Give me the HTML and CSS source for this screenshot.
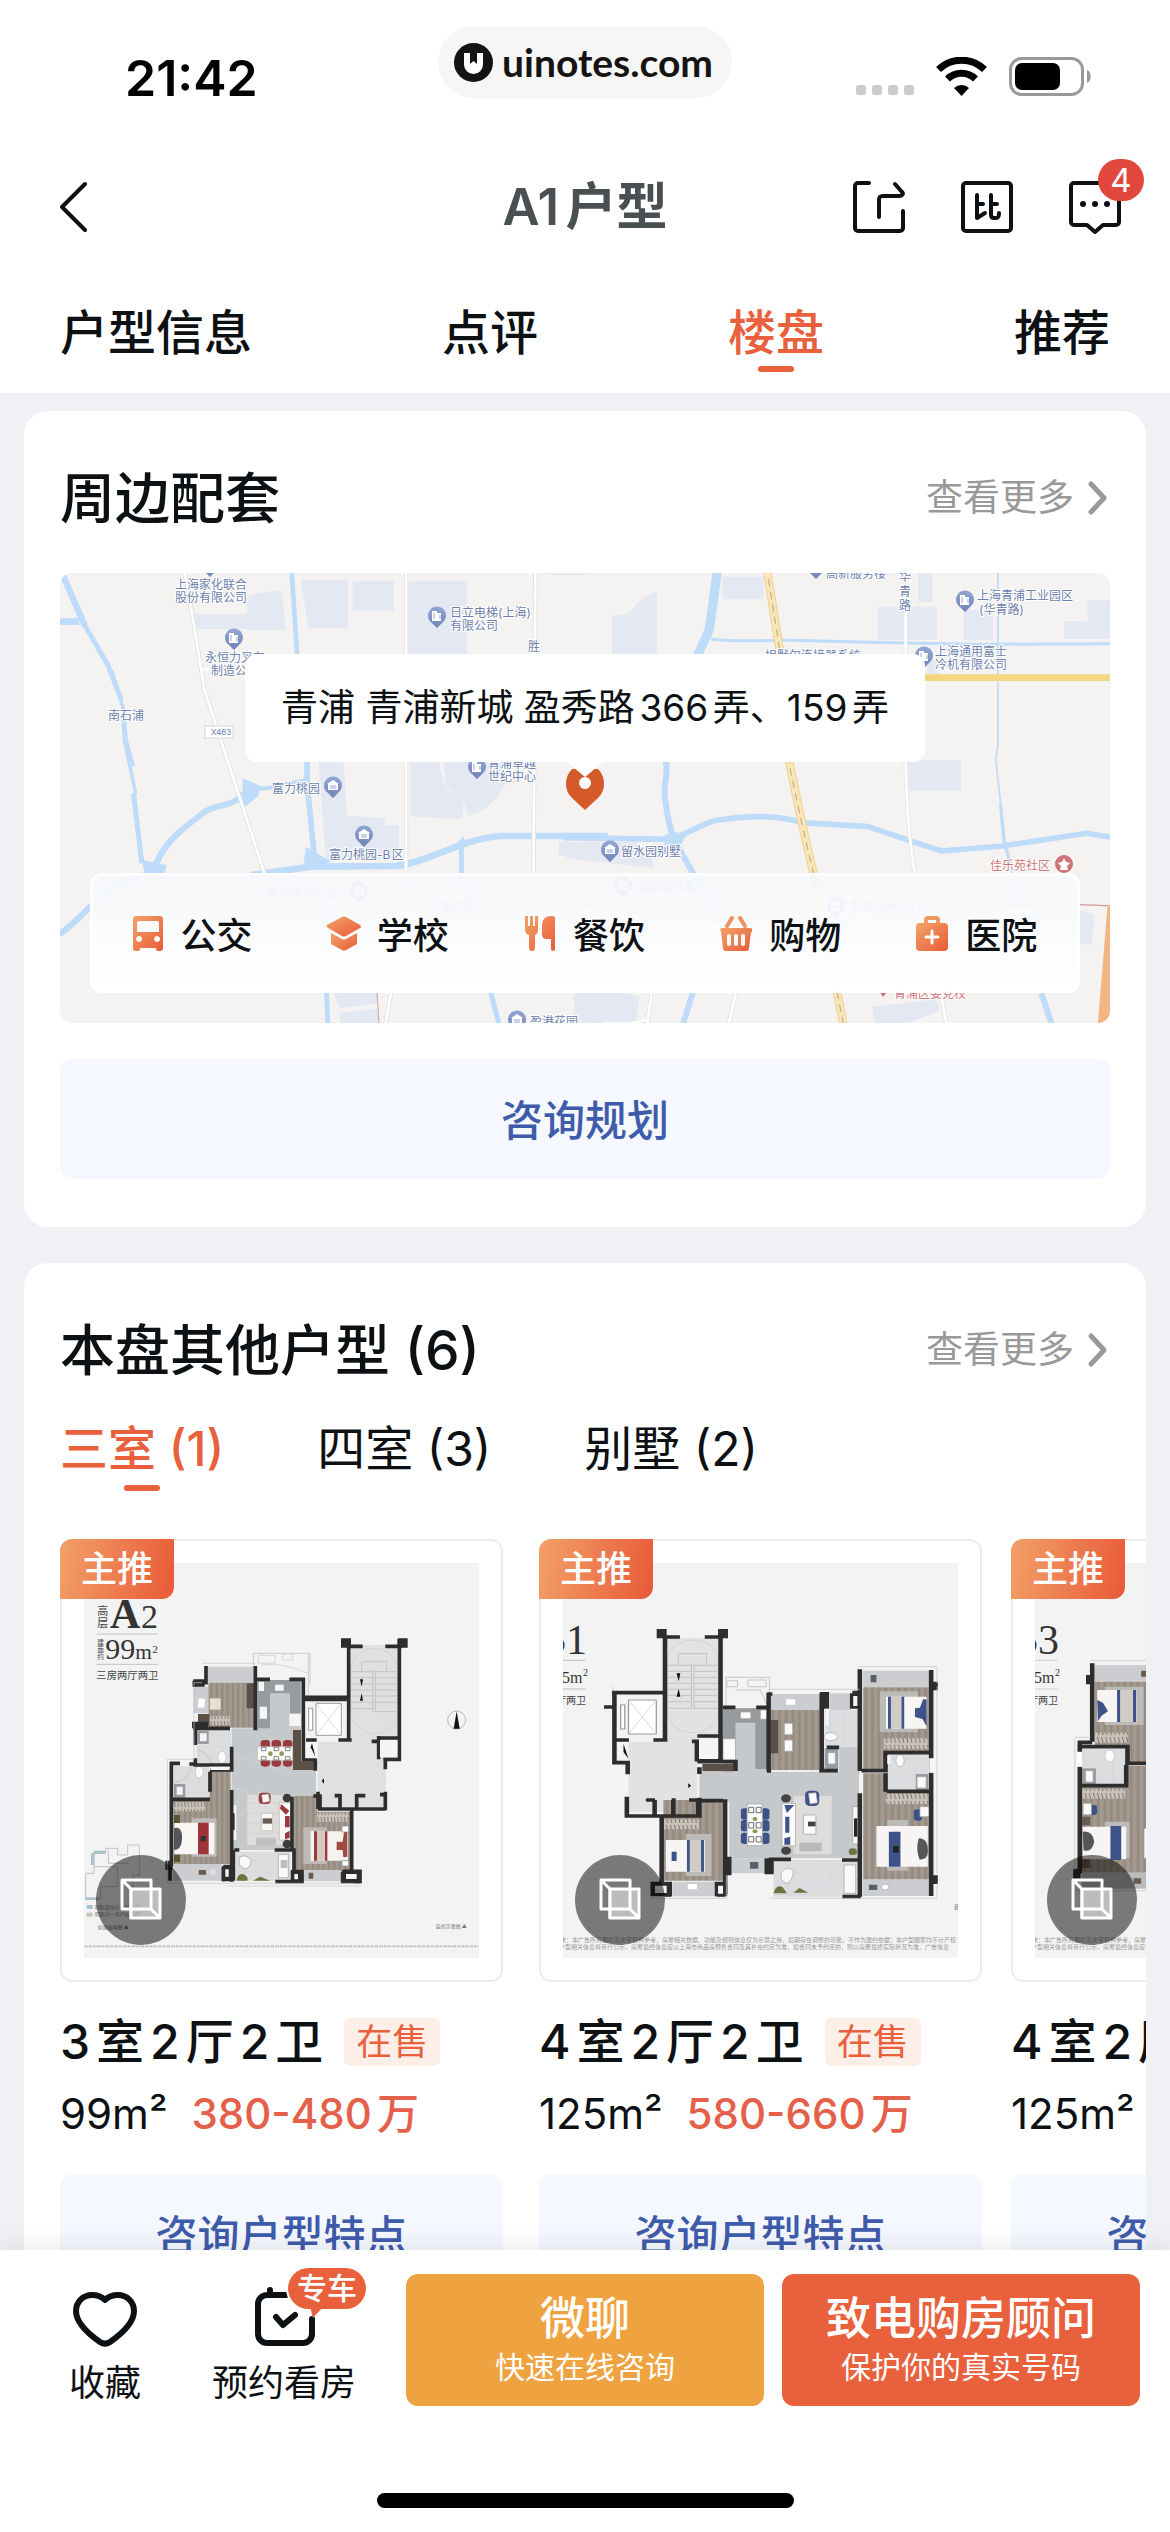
FILE: index.html
```html
<!DOCTYPE html>
<html lang="zh-CN">
<head>
<meta charset="utf-8">
<meta name="viewport" content="width=device-width, initial-scale=1">
<title>A1户型</title>
<link rel="stylesheet" href="styles.css">
</head>
<body>

<svg class="sprite" aria-hidden="true">
  <defs>
    <linearGradient id="warm" x1="0" y1="0" x2="1" y2="1">
      <stop offset="0" stop-color="#f2a36a"/><stop offset="1" stop-color="#e95b38"/>
    </linearGradient>
    <linearGradient id="pinfill" x1="0" y1="0" x2="0" y2="1">
      <stop offset="0" stop-color="#93a6d3"/><stop offset="1" stop-color="#6f83b8"/>
    </linearGradient>
    <pattern id="wood" width="16" height="60" patternUnits="userSpaceOnUse">
      <rect width="16" height="60" fill="#a0958a"/><rect width="5" height="60" fill="#958a7f"/><rect x="9" width="2" height="60" fill="#aca297"/>
    </pattern>
    <pattern id="tile" width="34" height="34" patternUnits="userSpaceOnUse">
      <rect width="34" height="34" fill="#dcdddf"/><path d="M0 0H34M0 0V34" stroke="#cfd1d3" stroke-width="2"/>
    </pattern>
    <pattern id="hanger" width="10" height="24" patternUnits="userSpaceOnUse">
      <rect width="10" height="24" fill="#c9c2b8"/><path d="M3 3l3 18" stroke="#5b534b" stroke-width="2"/>
    </pattern>
    <symbol id="chevron" viewBox="0 0 24 36"><path d="M5 4l13 14L5 32" fill="none" stroke="#999" stroke-width="5" stroke-linecap="round" stroke-linejoin="round"/></symbol>
    <symbol id="cube" viewBox="0 0 90 90">
      <rect x="33" y="33" width="31" height="31" fill="#fff" opacity=".5"/>
      <path d="M26 25h29v29H26zM35 34h29v29H35zM26 25l9 9M55 54l9 9" fill="none" stroke="#fff" stroke-width="3" stroke-linejoin="round"/>
    </symbol>
    <g id="pin">
      <path d="M0 12L-5 7A9 9 0 1 1 5 7Z" fill="url(#pinfill)"/>
      <path d="M-5-5h5v2h4v8h-9z" fill="#fff"/><path d="M-3-3v6M3-1v4" stroke="#93a6d3" stroke-width="1"/>
    </g>
    <g id="homepin">
      <path d="M0 12L-5 7A9 9 0 1 1 5 7Z" fill="url(#pinfill)"/>
      <path d="M0-6L6-2H5v6H-5v-6h-1z" fill="#fff"/><path d="M-3 0h6M-3 2h6" stroke="#93a6d3" stroke-width="1"/>
    </g>
  </defs>
</svg>

<header class="top">
  <div class="status">
    <span class="time">21:42</span>
    <div class="site">
      <svg class="site-logo" viewBox="0 0 39 39"><circle cx="19.5" cy="19.5" r="19.5" fill="#161313"/><path d="M10 10h6v9l3-3 1 0 3 3v-9h6v11.500a9.500 9.500 0 0 1-19 0z" fill="#fff"/><path d="M16 9h7v12l-3.500-3-3.500 3z" fill="#161313"/></svg>
      <span>uinotes.com</span>
    </div>
    <svg class="signals" viewBox="0 0 237 42" aria-label="信号">
      <g fill="#ccc"><rect y="28" width="10" height="10" rx="3"/><rect x="16" y="28" width="10" height="10" rx="3"/><rect x="32" y="28" width="10" height="10" rx="3"/><rect x="48" y="28" width="10" height="10" rx="3"/></g>
      <g transform="translate(80 0)" fill="none" stroke="#000">
        <path d="M2.500 12.500a33 33 0 0 1 46 0" stroke-width="7"/><path d="M11.500 22a20 20 0 0 1 28 0" stroke-width="7"/><path d="M25.500 39L18 31a11 11 0 0 1 15 0z" fill="#000" stroke="none"/>
      </g>
      <rect x="154.500" y="1.500" width="72" height="36" rx="11" fill="none" stroke="#999" stroke-width="3"/>
      <rect x="159" y="6" width="45" height="27" rx="7"/><path d="M231 13c5 2 5 11 0 13z" fill="#999"/>
    </svg>
  </div>

  <div class="navbar">
    <button class="icon-btn back" aria-label="返回"><svg width="30" height="54" viewBox="0 0 30 54"><path d="M25 4L2 27l23 23" fill="none" stroke="#0d1114" stroke-width="4" stroke-linecap="round" stroke-linejoin="round"/></svg></button>
    <h1>A1户型</h1>
    <div class="nav-actions">
      <button class="icon-btn" aria-label="分享"><svg class="line-icon" viewBox="0 0 54 54"><path d="M17 3H6a3 3 0 0 0-3 3v42a3 3 0 0 0 3 3h42a3 3 0 0 0 3-3V31"/><path d="M27 37V20c0-3 1-4 4-4h16c3 0 5-2 3-4l-7-8"/></svg></button>
      <button class="icon-btn" aria-label="对比"><svg class="line-icon" viewBox="0 0 54 54"><rect x="3" y="3" width="48" height="48" rx="3"/><path d="M17 15v23l8-5M18 24h5M31 15v20c0 2 1 3 3 3h2c2 0 3-1 3-5M31 24h6"/></svg></button>
      <button class="icon-btn" aria-label="消息"><svg class="line-icon" viewBox="0 0 54 54"><path d="M19 45H6a3 3 0 0 1-3-3V6a3 3 0 0 1 3-3h42a3 3 0 0 1 3 3v36a3 3 0 0 1-3 3H35l-8 7z"/><g fill="#0d1114" stroke="none"><circle cx="15" cy="24" r="3"/><circle cx="27" cy="24" r="3"/><circle cx="39" cy="24" r="3"/></g></svg><span class="count">4</span></button>
    </div>
  </div>

  <nav class="tabs">
    <a href="#info">户型信息</a><a href="#review">点评</a><a class="active" href="#estate">楼盘</a><a href="#more">推荐</a>
  </nav>
</header>

<main>
  <section class="card" id="estate">
    <div class="card-head"><h2>周边配套</h2><a class="more" href="#around">查看更多<svg><use href="#chevron"/></svg></a></div>
    <div class="map">
      <svg class="map-art" viewBox="0 0 1050 450" preserveAspectRatio="xMidYMid slice">
        <rect width="1050" height="450" fill="#f4f3f1"/>
        <g transform="matrix(.35714 0 0 .33333 -20 -13)">
          <g fill="#e4e8f2">
            <path d="M730 60h132v145H752zM875 62h116v90H875zM580 110q40-18 98-18l10 118H580zM432 162h148v45H436zM1030 62h166v225h-166zM1408 38h120v6h-110z"/>
            <path d="M780 600h70l10 168 105 6 2 22h38v105H800zM1038 600h78q10 60 25 90 60 10 40 85-90 0-143-8zM1128 600h190q-10 130-120 170-5-60-60-90zM1452 845h220v55l-220-14zM820 1290h122l6 40-110 15zM838 1360l110-15 3 44H840zM1500 1290h150l-20 70-60 30-80-5z"/>
          </g>
          <g fill="none" stroke="#bfdbfa" stroke-linejoin="round">
            <path d="M62 40L90 110 125 195" stroke-width="18"/><path d="M55 185h55" stroke-width="20"/>
            <path d="M122 190L190 315 228 420M234 480L240 545 260 620M262 700L285 910" stroke-width="14"/><path d="M200 330L236 455V540L268 700" stroke-width="10"/>
            <path d="M705 38L720 285" stroke-width="13"/><path d="M748 600v70l22 240" stroke-width="16"/><path d="M570 690l70-6 105-24" stroke-width="12"/>
            <path d="M570 700C540 745 480 730 450 765 400 805 365 835 340 880L310 940 260 955C190 960 110 1090 50 1125" stroke-width="18"/>
            <path d="M590 945L760 920 990 918C1080 912 1180 835 1290 828H1590" stroke-width="20"/><path d="M1180 840v110l30 90M790 990l16 400M1260 1290l25 100" stroke-width="14"/>
          </g>
          <path d="M567 655l50 22-5 30-45 40zM745 860l70 45-80 25zM285 900l70 15-10 45-50-10zM1170 850l15-22 10 30z" fill="#bfdbfa"/>
          <g fill="none" stroke="#dddcda" stroke-width="12"><path d="M405 38q20 110 55 350L630 945M1025 38v950M1387 38l-5 900M984 1290l-16 100"/></g>
          <g fill="none" stroke="#fff" stroke-width="8"><path d="M405 38q20 110 55 350L630 945M1025 38v950M1387 38l-5 900M984 1290l-16 100M455 328h40"/></g>
          <path d="M943 1290l6 100M900 1070q120-40 350-50t330-10" fill="none" stroke="#d9a1a1" stroke-width="3"/>
        </g>
        <g transform="matrix(.35714 0 0 .33333 510 -13)">
          <path fill="#e4e8f2" d="M118 165q40 5 60-20 20-35 65-52v190H118zM427 50h115v68H427zM975 40h40v86h-40zM862 140h165v100H862zM1102 150h82v90h-82zM1383 183h66v-62h63v116h-129zM945 600h150v92H950zM-10 845l242 30v50l-242-30zM845 1340l180-22 10 35-90 36h-90zM10 1310l120-20 65 20-10 75h-80l-8-40-80 10zM1425 1050l45 15-10 90-40-5zM1000 300h30v42h-30z"/>
          <g fill="none" stroke="#bfdbfa" stroke-linejoin="round">
            <path d="M412 38L390 210 355 290" stroke-width="26"/><path d="M395 238q80 8 200 2l240 7 300 6 380-2" stroke-width="9"/>
            <path d="M268 600c10 60-12 70 0 130 5 50 15 70 18 100L345 940l60 110M345 1295l-28 95M1320 1300l28 90" stroke-width="17"/>
            <path d="M-20 833l300 5C340 820 380 780 430 778q130-20 220 10l185 12q80 30 205 73l170-15q130-20 235-38l80 14" stroke-width="17"/>
            <path d="M1198 38v520l-6 40 24 230 4 40 25 100v80" stroke-width="5"/><path d="M1205 730l10 110 20 80" stroke-width="9"/>
          </g>
          <path d="M265 825l30-10 30 10-15 30-45 10z" fill="#bfdbfa"/>
          <g fill="none" stroke="#f3d391" stroke-width="24"><path d="M553 38L590 290 615 610Q650 800 682 940L765 1389"/></g>
          <g fill="none" stroke="#f9e6b8" stroke-width="18"><path d="M553 38L590 290 615 610Q650 800 682 940L765 1389"/></g>
          <path d="M556 58L590 290 617 630Q650 800 682 940L765 1389" fill="none" stroke="#b9a98b" stroke-width="3" stroke-dasharray="22 16"/>
          <path d="M970 353h550" stroke="#f6d57f" stroke-width="20"/>
          <g fill="none" stroke="#dddcda" stroke-width="11"><path d="M940 140v480q5 190 25 320M230 1290l-14 100M465 1295l-20 95M1040 1310l14 80M170 1389l50-10"/></g>
          <g fill="none" stroke="#fff" stroke-width="8"><path d="M940 140v480q5 190 25 320M230 1290l-14 100M465 1295l-20 95M1040 1310l14 80M170 1389l50-10"/></g>
          <path d="M0 1020q200 60 600 70t500-30 420-22" fill="none" stroke="#cf9c9c" stroke-width="4"/>
          <path d="M1505 1040h15v350h-42z" fill="#f1b683"/>
        </g>
        <g class="map-labels">
          <text x="115" y="16">上海家化联合</text><text x="115" y="29">股份有限公司</text>
          <text x="390" y="44">日立电梯(上海)</text><text x="390" y="57">有限公司</text>
          <text x="145" y="89">永恒力叉车</text><text x="151" y="102">制造公司</text>
          <text x="48" y="147">南石浦</text><text x="468" y="78">胜</text>
          <text x="428" y="195">青浦卓越</text><text x="428" y="208">世纪中心</text>
          <text x="212" y="220">富力桃园</text><text x="269" y="286">富力桃园-B区</text>
          <text x="470" y="453">盈港花园</text><text x="207" y="325">民乐佳苑一区</text><text x="378" y="338">漕盈路</text>
          <text x="766" y="5">高新服务楼</text><text x="705" y="87">坦默尔连接器系统</text>
          <text x="839" y="8">华</text><text x="839" y="23">青</text><text x="839" y="37">路</text>
          <text x="917" y="27">上海青浦工业园区</text><text x="919" y="41">(华青路)</text>
          <text x="875" y="83">上海通用富士</text><text x="875" y="96">冷机有限公司</text>
          <text x="561" y="283">留水园别墅</text><text x="576" y="319">诚中城公寓</text><text x="789" y="339">青浦绿地中心</text>
          <g class="red"><text x="930" y="297">佳乐苑社区</text><text x="834" y="425">青浦区委党校</text></g>
        </g>
        <rect x="145" y="153" width="28" height="12" fill="#fff" stroke="#d5d8e2"/><text class="road-no" x="151" y="162">X463</text>
        <use href="#pin" x="150" y="-8"/><use href="#pin" x="377" y="43"/><use href="#pin" x="174" y="65"/><use href="#pin" x="417" y="194"/>
        <use href="#homepin" x="273" y="213"/><use href="#homepin" x="304" y="262"/><use href="#homepin" x="457" y="447"/><use href="#homepin" x="299" y="318"/>
        <use href="#pin" x="756" y="-6"/><use href="#pin" x="905" y="27"/><use href="#pin" x="864" y="83"/><use href="#homepin" x="550" y="277"/><use href="#homepin" x="563" y="313"/><use href="#pin" x="776" y="333"/>
        <circle cx="1004" cy="291" r="9" fill="#cf7478"/><path d="M1004 285l2 4 4 1-3 3 1 4h-8l1-4-3-3 4-1z" fill="#fff"/><path d="M819 418h9l-5 6z" fill="#cf7478"/>
        <path d="M525 237l-13-12q-6-6-6-14 0-9 6-15h26q6 6 6 15 0 8-6 14z" fill="#d55a29"/><circle cx="525" cy="210" r="6" fill="#fff"/>
      </svg>
      <p class="address">青浦 青浦新城 盈秀路366弄、159弄</p>
      <ul class="facilities">
        <li><a href="#bus"><svg viewBox="0 0 36 36"><path fill="url(#warm)" fill-rule="evenodd" d="M6 1h24q3 0 3 3v29q0 3-3 3h-2q-2 0-2-3H10q0 3-2 3H6q-3 0-3-3V4q0-3 3-3zm3 5q-2 0-2 2v9h22V8q0-2-2-2zM9 21a3 3 0 1 0 .1 0zm18 0a3 3 0 1 0 .1 0z"/></svg>公交</a></li>
        <li><a href="#school"><svg viewBox="0 0 36 36"><path fill="url(#warm)" d="M1 10q-1 2 1 3l14 8q2 1 4 0l14-8q2-1 0-3L20 2q-2-1-4 0z"/><path fill="url(#warm)" d="M5 18l11 6q2 1 4 0l11-6v11l-11 6q-2 1-4 0L5 29z"/></svg>学校</a></li>
        <li><a href="#food"><svg viewBox="0 0 36 36"><path fill="url(#warm)" d="M3 1h3v10h2V1h3v10h2V1h3v13q0 5-3 6v13q0 3-3 3t-3-3V20q-4-1-4-6zM33 3v31q0 2-2 2t-2-2V24h-5q-4 0-4-5V10q0-9 10-9 3 0 3 2z"/></svg>餐饮</a></li>
        <li><a href="#shop"><svg viewBox="0 0 36 36"><path d="M14 3L9 11M22 3l5 8" stroke="#f0905c" stroke-width="4" stroke-linecap="round"/><path fill="url(#warm)" fill-rule="evenodd" d="M4 13h28q3 0 2 4h-1l-2 16q0 3-3 3H8q-3 0-3-3L3 17q-2-4 1-4zm5 7v10q2 2 4 0V20q-2-2-4 0zm7 0v10q2 2 4 0V20q-2-2-4 0zm7 0v10q2 2 4 0V20q-2-2-4 0z"/></svg>购物</a></li>
        <li><a href="#hospital"><svg viewBox="0 0 36 36"><path d="M12 9V5q0-2 2-2h8q2 0 2 2v4" fill="none" stroke="#f09a63" stroke-width="4"/><rect x="2" y="8" width="32" height="28" rx="4" fill="url(#warm)"/><path d="M18 16v12M12 22h12" stroke="#fff" stroke-width="3" stroke-linecap="round"/></svg>医院</a></li>
      </ul>
    </div>
    <button class="ask">咨询规划</button>
  </section>

  <section class="card card-bleed" id="more">
    <div class="card-head"><h2>本盘其他户型 (6)</h2><a class="more" href="#plans">查看更多<svg><use href="#chevron"/></svg></a></div>
    <nav class="rooms"><a class="active" href="#r3">三室 (1)</a><a href="#r4">四室 (3)</a><a href="#villa">别墅 (2)</a></nav>
    <div class="plans">
      <div class="plan-group">
        <article class="plan">
          <div class="thumb">
            <svg class="drawing" viewBox="132 129 1185 1185">
              <rect x="132" y="129" width="1185" height="1185" fill="#f3f3f3"/>
              <g fill="#333" class="serif">
                <text x="210" y="324" font-size="126" font-weight="700">A</text><text x="303" y="324" font-size="102">2</text>
                <text x="196" y="418" font-size="90">99</text><text x="286" y="418" font-size="64">m</text><text x="337" y="398" font-size="34">2</text>
              </g>
              <g fill="#444"><text x="172" y="286" font-size="33">高</text><text x="172" y="322" font-size="33">层</text><text x="172" y="375" font-size="20">建</text><text x="172" y="396" font-size="20">面</text><text x="172" y="417" font-size="20">约</text><text x="169" y="478" font-size="31">三房两厅两卫</text></g>
              <path d="M170 342h184M170 433h184" stroke="#aaa" stroke-width="2"/>
              <!-- floors -->
              <path d="M932 375h143v290H932zM833 665h205v195H833z" fill="#e0e0e0"/>
              <path d="M503 440h138v48H503zM460 500h45v80h-45zM400 1032h145v50H400zM785 1050h120v34H785z" fill="#cbcdd0"/>
              <path d="M505 488h137v135H505zM508 752h64v90h-64zM400 842h172v190H400zM762 828h70v222h-70zM832 875h102v175H832z" fill="url(#wood)"/>
              <path d="M620 490h22v75h-22zM474 582h34v36h-34zM758 630h25v120h-25zM758 725h70v25h-70z" fill="#5c5046"/>
              <path d="M652 480h130v150H652zM575 625h183v365H575zM758 750h70v78h-70z" fill="#c6c9cb"/>
              <path d="M652 480h130v40H690v105h-38zM750 520h32v60h-32z" fill="#979b9e"/>
              <path d="M575 700l180 60M590 900l80-100M660 640l60 30M580 800l90 40" stroke="#d6d8da" stroke-width="2" fill="none"/>
              <path d="M470 630h103v103H470zM400 738h108v100H400zM583 995h168v87H583z" fill="url(#tile)"/>
              <path d="M472 632h34v40h-34zM402 792h34v42h-34z" fill="#999da1"/><path d="M480 640h20v24h-20zM410 800h18v24h-18zM748 582h34v36h-34zM656 485h16v28h-16zM705 494h26v18h-26zM659 560h22v36h-22z" fill="#f5f5f5"/>
              <g fill="#fafafa" stroke="#bbb" stroke-width="2"><ellipse cx="546" cy="712" rx="12" ry="18"/><ellipse cx="478" cy="756" rx="12" ry="18"/><path d="M470 690a50 50 0 0 1 45 42M455 738a52 52 0 0 1-54 48" fill="none"/></g>
              <!-- furniture -->
              <path d="M510 535h32v34h-32z" fill="#e9dfcb"/><path d="M476 534l20 4-4 26-18-2z" fill="#fff"/>
              <path d="M510 588h60v28h-60zM402 846h95v28h-95zM830 878h96v28h-96z" fill="url(#hanger)"/>
              <path d="M622 825h120v150H622z" fill="#dedddb"/><path d="M625 850h115M625 880h115M625 910h115M625 940h115" stroke="#cfcdca" stroke-width="2"/>
              <g fill="#9b3a3e"><rect x="662" y="660" width="28" height="26" rx="10"/><rect x="695" y="660" width="28" height="26" rx="10"/><rect x="729" y="660" width="28" height="26" rx="10"/><rect x="662" y="716" width="28" height="24" rx="10"/><rect x="695" y="716" width="28" height="24" rx="10"/><rect x="729" y="716" width="28" height="24" rx="10"/><rect x="656" y="818" width="36" height="34" rx="12"/></g>
              <path d="M652 680h106v41H652zM665 825l20-3 4 22-20 4zM718 848h36v112h-36zM664 880h34v52h-34z" fill="#fbfaf8" stroke="#b7b3ae" stroke-width="2"/>
              <path d="M664 682h14v10h-14zM702 682h14v10h-14zM736 682h14v10h-14zM664 710h14v10h-14zM702 710h14v10h-14zM736 710h14v10h-14z" fill="none" stroke="#555" stroke-width="2"/><circle cx="691" cy="701" r="7" fill="#8a9a5b"/><circle cx="725" cy="701" r="7" fill="#8a9a5b"/>
              <path d="M723 852l25 20-10 12-18-18zM735 888h14v34h-14zM735 940l14-8v22l-14 4z" fill="#9b3a3e"/><circle cx="741" cy="834" r="13" fill="#3c3c3c"/><circle cx="741" cy="972" r="13" fill="#3c3c3c"/>
              <path d="M668 895h28v16h-28z" fill="#6b5e55"/><path d="M648 953h60v22h-60z" fill="#c3c0c2"/><path d="M575 855h14v105h-14z" fill="#f4f4f4"/><path d="M576 880h8v50h-8z" fill="#333"/>
              <path d="M455 895h75v115h-75zM790 922h70v110h-70z" fill="#bdbbb8"/><path d="M403 908h120v95H403z" fill="#f8f5f3"/><path d="M474 908h32v95h-32z" fill="#9d3437"/><path d="M402 925q20-8 24 20 2 45-24 45z" fill="#55565a"/><path d="M402 885h18v24h-18zM402 1004h18v22h-18z" fill="#5c5330"/><path d="M482 948h16v16h-16z" fill="#333"/>
              <path d="M812 934h112v88H812z" fill="#f6f2ec"/><path d="M822 934h9v88h-9zM855 934h7v88h-7z" fill="#9d3a3a"/><path d="M831 934h24v88h-24z" fill="#d2cbc1"/><path d="M890 965h18l4-28 10-2v75l-12 2-2-22h-18z" fill="#a04a42"/><path d="M906 918h20v18h-20zM906 1022h20v16h-20z" fill="#fff" stroke="#888" stroke-width="2"/>
              <path d="M476 1050h22v14h-22zM806 1058h14v18h-14z" fill="#6a5a50"/><circle cx="518" cy="1056" r="10" fill="#ddd"/>
              <path d="M600 1010q15-8 34 10-4 30-22 26-22-10-12-36zM715 1003h30v70h-30z" fill="#f8f8f8" stroke="#999" stroke-width="2"/><path d="M590 1082q4-26 24-18 12 8 8 18zM640 1082l20-12 30 12z" fill="#69743f"/><path d="M722 1020h20v24h-20z" fill="#b7bcc0"/>
              <!-- elevator and stairs -->
              <path d="M640 480v-80h170v95M920 530H805V400" fill="none" stroke="#ccc" stroke-width="3"/><path d="M655 406h50v24h-50zM728 402h30v18h-30zM665 435q60-10 138 25" fill="none" stroke="#c8c8c8" stroke-width="2"/>
              <path d="M828 550h76v96h-76zM806 565h12v66h-12z" fill="#fff" stroke="#999" stroke-width="3"/><path d="M828 550l76 96M904 550l-76 96" stroke="#ccc" stroke-width="2"/>
              <path d="M932 455h68M932 473h68M932 492h68M932 510h68M932 528h68M932 547h68M932 566h68M1004 455h70M1004 473h70M1004 492h70M1004 510h70M1004 528h70M1004 547h70M1004 575h70M998 450v125M1006 450v125M965 455v-30h75v28" stroke="#b5b5b5" stroke-width="2" fill="none"/>
              <rect x="932" y="385" width="142" height="256" rx="71" fill="none" stroke="#ccc" stroke-width="2"/><path d="M960 478h9l-4 22zM960 542h9l-4-22zM845 783l7-8v16z" fill="#111"/>
              <!-- walls -->
              <g fill="none" stroke="#2d2d2d" stroke-width="11">
                <path d="M498 438v50h-35v12M646 438v185M640 625h12M650 478h40M748 478h42v22M790 500v220h40M793 532h130M793 538h127M926 380v285M895 660h40M905 370h28M1078 358v360h-48M928 379h40M1036 379h50M1016 648v70M1012 654h66M995 664h20M798 660h32M1036 720v28M834 815v52M834 867h202M1036 815v56M900 822v45M950 822v45M884 827h18M948 827h28M1020 824h15M935 870v180M570 625h-105v-10M466 620v55M466 715v20h110M575 680v75M510 750h62M510 755v60M394 726v314M390 730h30M395 838h115M575 810v275M550 1042v42M580 990v92M583 990h15M704 990h52v-160M820 828h20v40M826 752v-34M762 985v100M706 1085h80v-30h-22v28M908 1056v28h52v-30h-50M550 1040h26M390 1040v42M448 732h15"/>
              </g>
              <path d="M903 355h30v28h-30zM1073 355h30v28h-30zM460 478h34v22h-34zM456 605h48v20h-48zM376 1022h22v28h-22zM752 1050h34v38h-34zM905 1050h58v40h-58zM546 1038h34v46h-34z" fill="#2d2d2d"/><path d="M763 1062h11v16h-11zM918 1062h32v15h-32zM556 1048h10v22h-10zM798 670h16v42h-16zM1020 660h52v52h-52zM511 740h58v10h-58z" fill="#f5f5f5"/><path d="M816 670l10 40-14-28z" fill="#111"/>
              <path d="M486 430h160M382 718h80v-230h24M382 718v372h560M562 1098h400" fill="none" stroke="#c5c5c5" stroke-width="2"/>
              <circle cx="1250" cy="600" r="27" fill="none" stroke="#999" stroke-width="2"/><path d="M1250 574l9 52h-18z" fill="#111"/>
              <!-- key plan -->
              <g fill="none" stroke="#aaa" stroke-width="2"><path d="M137 1140v-80h25v-65h35v-10h36v20h30v-30h35v90h-20v70M162 1040h70v60h-50v40M205 990v40h60"/></g><path d="M162 992h35v10h-35zM153 1000h10v35h-10zM137 1132h40v8h-40zM140 1155h18v12h-18z" fill="#a9c4c9"/><path d="M140 1178h18v12h-18z" fill="#c9c0b9"/>
              <g fill="#777" font-size="15"><text x="164" y="1167">阴影部分计产权面积</text><text x="164" y="1189">阴影计一半产权面积</text><text x="173" y="1226">原始结构图 ▲</text><text x="1187" y="1225">装修示意图 ▲</text></g>
              <path d="M133 1279h1183" stroke="#bbb" stroke-width="5" stroke-dasharray="7 2 3 2 9 3"/>
            </svg>
            <span class="flag">主推</span>
            <button class="view3d" aria-label="查看三维户型"><svg><use href="#cube"/></svg></button>
          </div>
          <h3>3室2厅2卫<span class="tag">在售</span></h3>
          <p class="facts">99m²<span class="price">380-480万</span></p>
          <button class="ask">咨询户型特点</button>
        </article>
      </div>
      <div class="plan-group">
        <article class="plan">
          <div class="thumb">
            <svg class="drawing" viewBox="0 0 395 395">
              <rect width="395" height="395" fill="#f3f3f3"/>
              <g transform="matrix(.41459 0 0 .33333 -43.117 -43)">
                <path d="M355 355h125v310H355zM262 665h165v210H262z" fill="#e2e2e2"/>
                <path d="M828 452h160v50H828zM605 522h120v48H605zM748 520h50v55h-50zM828 1078h160v50H828zM510 1015h82v45h-82zM368 1085h105v44H368z" fill="#cbcdd0"/>
                <path d="M828 502h160v250H828zM828 760h160v318H828zM605 570h118v180H605zM346 840h146v242H346z" fill="url(#wood)"/>
                <path d="M490 565h108v280H490zM433 755h385v260H505V842h-72zM770 680h50v80h-50z" fill="#c6c9cb"/>
                <path d="M490 565h108v182h-30V608h-48v50h-30z" fill="#979b9e"/><path d="M735 570h82v110h-82zM885 702h103v110H885zM612 1020h205v110H612z" fill="url(#tile)"/>
                <path d="M735 685h33v64h-33zM955 762h30v48h-30z" fill="#999da1"/>
                <path d="M440 732h76v22h-76zM605 600h18v100h-18z" fill="#5c5046"/>
                <path d="M868 514h92v122h-92zM886 900h50v152h-50zM400 942h62v126h-62z" fill="#bdbbb8"/>
                <path d="M883 530h98v96h-98zM860 918h124v122H860zM352 960h94v95H352z" fill="#f7f5f3"/>
                <path d="M888 530h7v96h-7zM920 530h7v96h-7zM890 935h28v105h-28zM403 960h7v95h-7zM437 960h7v95h-7zM953 565l12-2 8-26 8 2v80l-10-22-18-6zM366 995h12v28h-12z" fill="#3d5288"/><path d="M895 530h25v96h-25zM410 960h27v95h-27z" fill="#cfcbc5"/><path d="M962 955q24 0 22 42 0 22-20 22-10-30-2-64z" fill="#55565a"/><path d="M900 978h14v20h-14z" fill="#222"/>
                <path d="M878 655h106v32H878zM882 820h102v32H882zM346 898h86v30h-86z" fill="url(#hanger)"/>
                <path d="M660 828h92v175h-92z" fill="#dedddb"/>
                <g fill="#3d5288"><rect x="533" y="865" width="20" height="34" rx="8"/><rect x="533" y="900" width="20" height="34" rx="8"/><rect x="533" y="938" width="20" height="34" rx="8"/><rect x="582" y="865" width="20" height="34" rx="8"/><rect x="582" y="900" width="20" height="34" rx="8"/><rect x="582" y="938" width="20" height="34" rx="8"/><rect x="688" y="812" width="34" height="46" rx="12"/><rect x="950" y="868" width="20" height="34" rx="8"/></g>
                <path d="M548 852h37v125h-37zM632 850h33v128h-33zM684 885h30v58h-30zM696 820l18-2 4 30-18 4zM638 610h20v34h-20zM638 660h20v34h-20zM490 656h30v64h-30zM580 570h18v28h-18zM532 576h25v20h-25zM803 860h14v112h-14zM743 698h18v34h-18zM958 770h22v34h-22zM965 860h22v30h-22zM782 1035h28v85h-28z" fill="#fafafa" stroke="#a5a29e" stroke-width="2"/>
                <path d="M552 862h12v16h-12zM570 862h12v16h-12zM552 908h12v16h-12zM570 908h12v16h-12zM552 950h12v16h-12zM570 950h12v16h-12z" fill="none" stroke="#444" stroke-width="2"/><circle cx="567" cy="897" r="6" fill="#8a9a5b"/><circle cx="567" cy="934" r="6" fill="#8a9a5b"/><circle cx="803" cy="995" r="10" fill="#69743f"/>
                <path d="M638 855l24 0-18 24zM640 890h10v48h-10zM638 955l14-5v24h-14z" fill="#3d5288"/><path d="M695 905h18v14h-18z" fill="#444"/><circle cx="642" cy="835" r="12" fill="#444"/><circle cx="642" cy="992" r="12" fill="#444"/><path d="M674 968h54v26h-54z" fill="#b9b8ba"/><path d="M806 895h8v55h-8z" fill="#222"/>
                <g fill="#fafafa" stroke="#aaa" stroke-width="2"><ellipse cx="750" cy="650" rx="16" ry="12"/><ellipse cx="917" cy="722" rx="10" ry="18"/><path d="M630 1060q6-22 30-10-2 36-18 40-14-6-12-30z"/><circle cx="881" cy="1101" r="9"/></g>
                <path d="M612 1120q6-30 22-18l10 18zM660 1118l14-14 22 14z" fill="#69743f"/><path d="M846 465h14v22h-14zM842 1094h20v16h-20zM555 1026h20v20h-20z" fill="#5b5f6a"/><path d="M642 538h22v16h-22zM405 1092h22v16h-22z" fill="#fff"/>
                <path d="M262 540h67v102h-67zM243 555h10v72h-10z" fill="#fff" stroke="#999" stroke-width="3"/><path d="M262 540l67 102M329 540l-67 102" stroke="#ccc" stroke-width="2"/>
                <path d="M355 436h58M355 454h58M355 472h58M355 490h58M355 508h58M355 526h58M355 545h58M355 565h58M420 436h58M420 454h58M420 472h58M420 490h58M420 508h58M420 526h58M420 545h58M420 565h58M414 432v135M420 432v135M382 436v-35h68v32M497 560v-88h105v50M500 482h25v18h-25zM550 480h44v20h-44zM520 510l60 0 18 50" stroke="#b8b8b8" stroke-width="2" fill="none"/>
                <rect x="356" y="360" width="122" height="278" rx="61" fill="none" stroke="#ccc" stroke-width="2"/><path d="M378 460h9l-4 24zM378 530h9l-4-24zM406 790l7 7-7 7z" fill="#111"/>
                <g fill="none" stroke="#2d2d2d" stroke-width="11">
                  <path d="M222 518h126M350 345v310M228 513v215h32v35M203 561h22M225 660h38M322 660h34M484 345v385M350 351h36M446 351h42M415 664h12v55h60M428 648h60M428 725h92v28M258 830v58h175v-55M325 840v46M370 840v46M304 840h22M366 840h10M408 840h20M433 762v-20M430 835v55M342 890v200M495 838v285M490 842h-65M600 518v235M597 522h12M490 562h30M570 562h30M606 753h-10M728 518v238M722 752h45M740 682h30M802 518h20M820 448v305M824 752h58v-60M882 698h106M992 450v265M992 758v370M885 814h104M882 815v-55M820 820v310M505 1010v55M500 1060h10M600 1018h54M606 1020v40M777 1020h45M778 1130h44M350 1125h15M475 1125h20"/>
                </g>
                <path d="M330 327h24v28h-24zM478 327h24v28h-24zM724 516h22v50h-22zM796 520h24v46h-24zM988 485h20v26h-20zM988 1066h20v26h-20zM590 1015h22v48h-22zM315 1085h52v44h-52zM470 1085h30v44h-30z" fill="#2d2d2d"/><path d="M326 1097h28v22h-28zM478 1097h12v24h-12zM804 528h10v30h-10zM432 655h46v62h-46zM236 670h12v48h-12zM737 566h8v50h-8zM886 706h8v26h-8zM990 716h12v42h-12z" fill="#f5f5f5"/><path d="M250 672l12 44-12-20z" fill="#111"/>
                <path d="M816 440h190v50M1006 500v560M1006 1090v45H820M603 1135h215M600 508h220M224 500v10M498 1065v70H315" fill="none" stroke="#c5c5c5" stroke-width="2"/>
                <path d="M104 421h54M104 507h54" stroke="#aaa" stroke-width="2"/>
              </g>
              <g class="serif" fill="#333"><text x="-28" y="91" font-size="46" font-weight="700">B</text><text x="3" y="91" font-size="42">1</text><text x="-1" y="120" font-size="16">5m</text><text x="20" y="113" font-size="10">2</text></g>
              <text x="-7" y="141" font-size="10" fill="#444">厅两卫</text><text x="391" y="346" font-size="6" fill="#777">装修</text>
              <g fill="#999" font-size="6"><text x="-3" y="379">重：本广告所有图片及文字仅供参考，房屋相关数据、功能及规则信息仅为示意之用，后期存在调整的可能，不作为邀约依据；本户型图家均不计产权</text><text x="-4" y="386">户型相关信息将另行公示，房屋最终信息应以上海市商品房预售合同及其补充约定为准，如合同未予约定的，则以房屋最终实际状况为准，广告信息</text></g>
            </svg>
            <span class="flag">主推</span>
            <button class="view3d" aria-label="查看三维户型"><svg><use href="#cube"/></svg></button>
          </div>
          <h3>4室2厅2卫<span class="tag">在售</span></h3>
          <p class="facts">125m²<span class="price">580-660万</span></p>
          <button class="ask">咨询户型特点</button>
        </article>
        <article class="plan">
          <div class="thumb">
            <svg class="drawing" viewBox="0 0 395 395">
              <rect width="395" height="395" fill="#f3f3f3"/>
              <g transform="matrix(.41459 0 0 .33333 -514.924 -43)">
                <path d="M1386 435h140v50h-140z" fill="#cbcdd0"/><path d="M1386 485h140v245h-60v-50h-80zM1355 738h170v320h-170z" fill="url(#wood)"/><path d="M1355 686h105v108h-105z" fill="url(#tile)"/><path d="M1355 1058h170v48h-170z" fill="#b9bbbd"/>
                <path d="M1355 745h34v50h-34z" fill="#999da1"/><path d="M1410 500h94v115h-94zM1410 905h60v110h-60z" fill="#bdbbb8"/><path d="M1392 510h95v96h-95zM1357 920h105v98h-105z" fill="#f7f5f3"/>
                <path d="M1440 510h8v96h-8zM1478 510h8v96h-8zM1424 918h26v102h-26zM1392 540l14 8 12 26-16 14-8 16z" fill="#3d5288"/><path d="M1448 510h30v96h-30z" fill="#cfcbc5"/><path d="M1357 935q24-4 28 30-6 34-26 26z" fill="#55565a"/><rect x="1370" y="855" width="22" height="30" rx="8" fill="#3d5288"/>
                <path d="M1386 638h80v30h-80zM1355 806h105v30h-105z" fill="url(#hanger)"/><path d="M1358 850h20v34h-20zM1364 752h18v34h-18zM1505 925h14v90h-14z" fill="#fafafa" stroke="#a5a29e" stroke-width="2"/><ellipse cx="1422" cy="708" rx="11" ry="18" fill="#fafafa" stroke="#aaa"/>
                <path d="M1355 890h20v26h-20zM1355 1018h20v26h-20zM1498 452h20v18h-20zM1480 1075h18v16h-18z" fill="#6a5a50"/>
                <g fill="none" stroke="#2d2d2d" stroke-width="11"><path d="M1380 430v235M1345 667h35M1350 665v30M1350 740v320M1345 680h120v50h65M1462 735v62h-110"/></g><path d="M1365 465h18v28h-18zM1334 1046h18v30h-18z" fill="#2d2d2d"/><path d="M1344 698h11v42h-11z" fill="#fff"/>
                <path d="M1374 422h150M1338 655v395M1338 652h38M1338 1112h190M1242 421h54M1242 507h54" fill="none" stroke="#c5c5c5" stroke-width="2"/>
              </g>
              <g class="serif" fill="#333"><text x="-28" y="91" font-size="46" font-weight="700">B</text><text x="3" y="91" font-size="42">3</text><text x="-1" y="120" font-size="16">5m</text><text x="20" y="113" font-size="10">2</text></g>
              <text x="-7" y="141" font-size="10" fill="#444">厅两卫</text>
              <g fill="#999" font-size="6"><text x="-3" y="379">重：本广告所有图片及文字仅供参考，房屋相关数据、功能及规则</text><text x="-4" y="386">户型相关信息将另行公示，房屋最终信息应以上海市商品房</text></g>
            </svg>
            <span class="flag">主推</span>
            <button class="view3d" aria-label="查看三维户型"><svg><use href="#cube"/></svg></button>
          </div>
          <h3>4室2厅2卫<span class="tag">在售</span></h3>
          <p class="facts">125m²<span class="price">580-660万</span></p>
          <button class="ask">咨询户型特点</button>
        </article>
      </div>
    </div>
  </section>
</main>

<footer class="dock">
  <div class="dock-row">
    <div class="shortcuts">
      <button class="shortcut"><svg viewBox="0 0 64 64"><path d="M32 14c-4-4-9-5-13-5C10 9 3 16 3 25c0 12 14 24 24 31 3 2 7 2 10 0 10-7 24-19 24-31C61 16 54 9 45 9c-4 0-9 1-13 5z"/></svg>收藏</button>
      <button class="shortcut shortcut-wide"><span class="shortcut-icon"><svg viewBox="0 0 64 64"><path d="M34 9H15a9 9 0 0 0-9 9v30a9 9 0 0 0 9 9h36a9 9 0 0 0 9-9V33M18 4v4M24 31l7 8 12-10"/></svg><span class="bubble">专车</span></span>预约看房</button>
    </div>
    <button class="cta chat"><strong>微聊</strong><span>快速在线咨询</span></button>
    <button class="cta call"><strong>致电购房顾问</strong><span>保护你的真实号码</span></button>
  </div>
  <div class="home-bar"></div>
</footer>
</body>
</html>
```
FILE: styles.css
```css
* { box-sizing: border-box; margin: 0; padding: 0; }

body {
  display: flex;
  flex-direction: column;
  height: 100vh;
  background: #f0f1f5;
  color: #0d1114;
  font-family: Inter, "Noto Sans CJK SC", sans-serif;
  font-size: 36px;
  text-autospace: normal;
}

a { color: inherit; text-decoration: none; }
button { border: 0; background: none; color: inherit; font: inherit; text-autospace: inherit; cursor: pointer; }
ul { list-style: none; }
svg { display: block; }
.sprite { position: absolute; width: 0; height: 0; }

/* header */
.top { flex: none; background: #fff; }
.status {
  position: relative;
  display: flex;
  align-items: center;
  justify-content: space-between;
  height: 156px;
  padding: 0 77px 0 125px;
}
.time { color: #000; font-size: 50px; font-weight: 600; line-height: 60px; }
.site {
  position: absolute;
  top: 26px;
  left: 50%;
  display: flex;
  align-items: center;
  gap: 9px;
  height: 72px;
  padding: 0 19px 0 16px;
  border-radius: 36px;
  background: #f6f6f6;
  color: #161313;
  font-family: Lato, sans-serif;
  font-size: 39px;
  font-weight: 700;
  transform: translateX(-50%);
}
.site-logo { width: 39px; height: 39px; }
.signals { width: 237px; height: 42px; }

.navbar {
  display: grid;
  grid-template-columns: 1fr auto 1fr;
  align-items: center;
  height: 102px;
  padding: 0 48px;
}
.back { justify-self: start; margin-left: 12px; }
h1 { color: #4a4f52; font-size: 51px; font-weight: 600; line-height: 60px; }
.icon-btn { position: relative; }
.nav-actions { display: flex; justify-content: flex-end; gap: 54px; }
.line-icon {
  width: 54px;
  height: 54px;
  fill: none;
  stroke: #0d1114;
  stroke-width: 4;
  stroke-linecap: round;
  stroke-linejoin: round;
}
.count {
  position: absolute;
  top: -21px;
  left: 30px;
  width: 46px;
  border-radius: 21px;
  background: #e1473d;
  color: #fff;
  font-size: 33px;
  line-height: 42px;
  text-align: center;
}

.tabs { display: flex; justify-content: space-between; padding: 45px 60px 21px; }
.tabs a, .rooms a { position: relative; font-size: 48px; line-height: 60px; }
.tabs a { padding-bottom: 9px; font-weight: 500; }
.tabs .active, .rooms .active { color: #e9603d; font-weight: 500; }
.active::after {
  content: "";
  position: absolute;
  bottom: 0;
  left: 50%;
  width: 36px;
  height: 6px;
  border-radius: 3px;
  background: #e9603d;
  transform: translateX(-50%);
}

/* content */
main {
  display: flex;
  flex: 1;
  flex-direction: column;
  gap: 36px;
  min-height: 0;
  padding: 18px 24px;
  overflow-y: auto;
  scrollbar-width: none;
}
.card { flex: none; padding: 54px 36px 48px; border-radius: 24px; background: #fff; }
.card-head { display: flex; align-items: center; justify-content: space-between; }
h2 { font-size: 55px; font-weight: 500; line-height: 66px; }
.more { display: flex; align-items: center; gap: 12px; color: #999; font-size: 37px; line-height: 54px; }
.more svg { width: 24px; height: 36px; }

.map {
  position: relative;
  height: 450px;
  margin: 42px 0 36px;
  border-radius: 12px;
  overflow: hidden;
}
.map-art { width: 100%; height: 100%; }
.map-labels { fill: #6e7fae; font-size: 12px; stroke: #fff; stroke-width: 2px; paint-order: stroke; }
.map-labels .red { fill: #cf7478; }
.road-no { fill: #6e7fae; font-size: 8px; }
.address {
  position: absolute;
  top: 81px;
  left: 50%;
  padding: 0 36px;
  border-radius: 12px;
  background: #fff;
  font-size: 37px;
  line-height: 108px;
  white-space: nowrap;
  transform: translateX(-50%);
}
.address::after {
  content: "";
  position: absolute;
  top: 100%;
  left: 50%;
  border: 18px solid transparent;
  border-top: 15px solid #fff;
  border-bottom: 0;
  transform: translateX(-50%);
}
.facilities {
  position: absolute;
  right: 30px;
  bottom: 30px;
  left: 30px;
  display: flex;
  justify-content: space-around;
  align-items: center;
  height: 120px;
  padding-right: 3px;
  border: 3px solid #fff;
  border-radius: 12px;
  background: linear-gradient(rgba(247, 248, 251, .93), rgba(255, 255, 255, .98));
  font-weight: 500;
}
.facilities a { display: flex; align-items: center; gap: 15px; }
.facilities svg { width: 36px; height: 36px; }

.ask {
  display: block;
  width: 100%;
  height: 120px;
  padding-bottom: 3px;
  border-radius: 12px;
  background: #f5f8fe;
  color: #3f5bab;
  font-size: 42px;
  font-weight: 500;
}

.card-bleed { padding-right: 0; }
.card-bleed .card-head { padding-right: 36px; }
.rooms { display: flex; gap: 93px; margin: 36px 0 48px; }
.rooms a { padding-bottom: 12px; }

.plans { display: flex; gap: 36px; overflow-x: auto; scrollbar-width: none; }
.plan-group { display: flex; flex: none; gap: 29px; }
.plan { width: 443px; }
.thumb {
  position: relative;
  padding: 22px;
  border: 2px solid #ececec;
  border-radius: 12px;
}
.drawing { width: 100%; aspect-ratio: 1; font-family: "Noto Sans CJK SC", sans-serif; }
.serif { font-family: "Liberation Serif", serif; }
.flag {
  position: absolute;
  top: -2px;
  left: -2px;
  padding: 0 21px;
  border-radius: 12px 0;
  background: linear-gradient(100deg, #f2a068, #e95a38);
  color: #fff;
  font-weight: 500;
  line-height: 60px;
}
.view3d {
  position: absolute;
  bottom: 35px;
  left: 34px;
  border-radius: 50%;
  background: rgba(0, 0, 0, .5);
}
.view3d svg { width: 90px; height: 90px; }
h3 {
  display: flex;
  align-items: center;
  gap: 21px;
  height: 48px;
  margin-top: 36px;
  font-size: 48px;
  font-weight: 500;
  line-height: 48px;
  white-space: nowrap;
}
.tag {
  padding: 0 12px;
  border-radius: 6px;
  background: #fdeee8;
  color: #e9603d;
  font-size: 36px;
  font-weight: 400;
  line-height: 48px;
}
.facts {
  display: flex;
  gap: 24px;
  margin: 21px 0 33px;
  font-size: 42px;
  line-height: 54px;
  white-space: nowrap;
}
.price { color: #e5604a; font-weight: 500; }

/* bottom dock */
.dock {
  position: relative;
  flex: none;
  padding: 24px 30px;
  background: #fff;
  box-shadow: 0 -6px 24px rgba(0, 0, 0, .08);
}
.dock-row { display: flex; gap: 18px; }
.shortcuts { display: flex; flex: none; }
.shortcut {
  display: flex;
  flex-direction: column;
  align-items: center;
  gap: 12px;
  width: 150px;
  padding-top: 12px;
  line-height: 42px;
}
.shortcut-wide { width: 208px; }
.shortcut-icon { position: relative; }
.shortcut svg {
  width: 64px;
  height: 64px;
  fill: none;
  stroke: #0d1114;
  stroke-width: 6;
  stroke-linecap: round;
  stroke-linejoin: round;
}
.bubble {
  position: absolute;
  top: -18px;
  left: 36px;
  padding: 0 9px;
  border-radius: 21px;
  background: #e9603d;
  box-shadow: 0 0 0 2px #fff;
  color: #fff;
  font-size: 30px;
  font-weight: 500;
  line-height: 41px;
  white-space: nowrap;
}
.bubble::after {
  content: "";
  position: absolute;
  top: 38px;
  left: 22px;
  width: 14px;
  height: 12px;
  background: #e9603d;
  clip-path: polygon(0 0, 100% 0, 20% 100%);
}
.cta {
  display: flex;
  flex: 1;
  flex-direction: column;
  align-items: center;
  justify-content: center;
  height: 132px;
  border-radius: 12px;
  color: #fff;
  font-size: 30px;
  line-height: 42px;
}
.cta strong { font-size: 45px; font-weight: 500; line-height: 54px; }
.chat { background: #efa340; }
.call { background: #e9603d; }
.home-bar { width: 417px; height: 15px; margin: 87px auto 0; border-radius: 8px; background: #000; }
```
